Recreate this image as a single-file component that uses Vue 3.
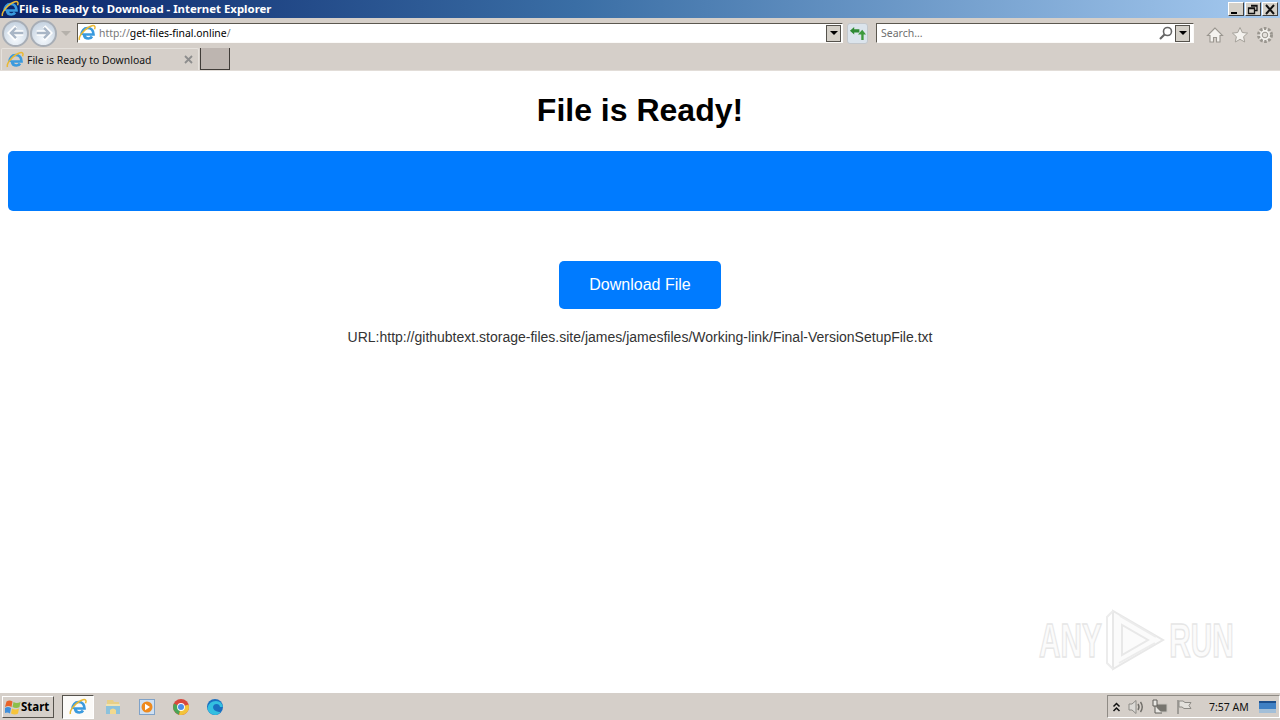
<script setup>
const taskApps = ['ie', 'folder', 'media', 'chrome', 'edge']
</script>

<template>
  <div class="screen">
    <header class="titlebar">
      <svg class="ie-small" viewBox="0 0 18 18"><use href="#ie-logo" /></svg>
      <span class="title-text">File is Ready to Download - Internet Explorer</span>
      <div class="win-buttons">
        <button class="win-btn"><span class="min-glyph"></span></button>
        <button class="win-btn">
          <svg viewBox="0 0 12 11" width="12" height="11"><path d="M4 1.500h6v5H8M1.500 4h6v5.500h-6zM1.500 4.500h6M4 2h6" fill="none" stroke="#111" stroke-width="1.300" /></svg>
        </button>
        <button class="win-btn">
          <svg viewBox="0 0 12 11" width="12" height="11"><path d="M2 1l8 9M10 1l-8 9" stroke="#111" stroke-width="2" /></svg>
        </button>
      </div>
    </header>

    <div class="toolbar">
      <div class="nav-group">
        <span class="nav-btn">
          <svg viewBox="0 0 24 24" width="22" height="22"><path d="M20 12H7" stroke="#fff" stroke-width="6" /><path d="M12 5l-7 7 7 7" fill="none" stroke="#fff" stroke-width="4" /><path d="M20 12H7M12 6.500L6.500 12l5.500 5.500" fill="none" stroke="#a9b6c6" stroke-width="2.600" /></svg>
        </span>
        <span class="nav-btn">
          <svg viewBox="0 0 24 24" width="22" height="22"><path d="M4 12h13" stroke="#fff" stroke-width="6" /><path d="M12 5l7 7-7 7" fill="none" stroke="#fff" stroke-width="4" /><path d="M4 12h13M12 6.500l5.500 5.500-5.500 5.500" fill="none" stroke="#a9b6c6" stroke-width="2.600" /></svg>
        </span>
        <span class="nav-caret"></span>
      </div>
      <div class="address">
        <svg class="ie-addr" viewBox="0 0 18 18"><use href="#ie-logo" /></svg>
        <span class="url"><span class="url-dim">http://</span>get-files-final.online<span class="url-dim">/</span></span>
        <span class="drop"><i></i></span>
      </div>
      <span class="refresh">
        <svg viewBox="0 0 18 18" width="18" height="18">
          <path d="M1 6l4.500-4v2.500H11v3.500H5.500V10z" fill="#2f8a34" />
          <path d="M13 16V10H9.500L14 5l4 5h-2.500v6z" fill="#3d9a3c" />
        </svg>
      </span>
      <div class="search">
        <span class="search-hint">Search...</span>
        <svg class="lens" viewBox="0 0 14 14" width="14" height="14"><circle cx="8.500" cy="5.500" r="4" fill="none" stroke="#666" stroke-width="1.600" /><path d="M5.500 8.500L1 13" stroke="#666" stroke-width="2.200" /></svg>
        <span class="drop"><i></i></span>
      </div>
      <div class="tools">
        <svg viewBox="0 0 18 18" width="18" height="18"><path d="M9 2L1.500 9.500H4V16h3.500v-4.500h3V16H14V9.500h2.500z" fill="#f4f2ee" stroke="#9a968f" stroke-width="1.100" /></svg>
        <svg viewBox="0 0 18 18" width="18" height="18"><path d="M9 1.500l2.300 5 5.300.6-4 3.600 1.100 5.300L9 13.300l-4.700 2.700 1.100-5.300-4-3.600 5.300-.6z" fill="#f4f2ee" stroke="#a5a19a" stroke-width="1" /></svg>
        <svg viewBox="0 0 18 18" width="18" height="18"><circle cx="9" cy="9" r="6.500" fill="#f4f2ee" stroke="#9a968f" stroke-width="3" stroke-dasharray="2.600 1.500" /><circle cx="9" cy="9" r="2.800" fill="#e4e1dc" stroke="#9a968f" /></svg>
      </div>
    </div>

    <div class="tabbar">
      <div class="tab">
        <svg class="ie-addr" viewBox="0 0 18 18"><use href="#ie-logo" /></svg>
        <span class="tab-text">File is Ready to Download</span>
        <svg class="tab-close" viewBox="0 0 9 9" width="9" height="9"><path d="M1 1l7 7M8 1L1 8" stroke="#8d8d8d" stroke-width="1.800" /></svg>
      </div>
      <div class="new-tab"></div>
    </div>

    <main class="page">
      <h1 class="heading">File is Ready!</h1>
      <div class="banner"></div>
      <button class="download">Download File</button>
      <p class="link-line">URL:http://githubtext.storage-files.site/james/jamesfiles/Working-link/Final-VersionSetupFile.txt</p>
      <div class="watermark">
        <span class="wm-text">ANY</span>
        <svg viewBox="0 0 60 64" width="60" height="64" class="wm-logo">
          <path d="M7 3v58L57 32zM16 17v30l26-15z" fill="#fbfbfb" stroke="#e8e8e8" stroke-width="2" />
          <path d="M7 3L1 9v46l6 6M14 8l36 21M13 55l36-20" fill="none" stroke="#ececec" stroke-width="2" />
        </svg>
        <span class="wm-text">RUN</span>
      </div>
    </main>

    <footer class="taskbar">
      <button class="start">
        <svg viewBox="0 0 16 16" width="16" height="16">
          <path d="M1.500 2.500q3-2 6 0l-1 5.500q-3-2-6.500 0z" fill="#e8642a" />
          <path d="M8.500 3q3 2 7 0l-1 5q-3 2-7 0z" fill="#8cbf4a" />
          <path d="M0 9q3-2 6 0l-1 5.500q-3-2-6 0z" fill="#3f8fdc" />
          <path d="M7 9.500q3 2 7 0l-1 5q-3 2-7 0z" fill="#f6c43a" />
        </svg>
        <span>Start</span>
      </button>
      <div class="apps">
        <span v-for="app in taskApps" :key="app" class="app" :class="{ active: app === 'ie' }">
          <svg v-if="app === 'ie'" viewBox="0 0 18 18" width="18" height="18"><use href="#ie-logo" /></svg>
          <svg v-else-if="app === 'folder'" viewBox="0 0 18 18" width="18" height="18">
            <path d="M3 2h6l1 2h5v5H3z" fill="#e7cf86" />
            <path d="M2 6h14v10H2z" fill="#8cc2dc" />
            <path d="M2 6h14v2H2z" fill="#f0e3b0" />
            <path d="M6 16v-4q3-3 6 0v4z" fill="#f2d98e" />
          </svg>
          <svg v-else-if="app === 'media'" viewBox="0 0 18 18" width="18" height="18">
            <rect x="1.500" y="1.500" width="15" height="15" fill="#cfe0f2" stroke="#7fa2c8" />
            <circle cx="9" cy="9" r="5.500" fill="#ee8a1e" />
            <path d="M7 5.800L12 9l-5 3.200z" fill="#fff" />
          </svg>
          <svg v-else-if="app === 'chrome'" viewBox="0 0 18 18" width="18" height="18">
            <circle cx="9" cy="9" r="8" fill="#d9473c" />
            <path d="M9 9L2 5.500A8 8 0 0 0 7 16.800z" fill="#4aa556" />
            <path d="M9 9l-2 7.800A8 8 0 0 0 16.500 6.500z" fill="#f3c43a" />
            <circle cx="9" cy="9" r="3.900" fill="#fff" />
            <circle cx="9" cy="9" r="3" fill="#4d8de8" />
          </svg>
          <svg v-else viewBox="0 0 18 18" width="18" height="18">
            <circle cx="9" cy="9" r="8" fill="#1a6fc0" />
            <path d="M1.500 10Q3 3 10 3q6 0 6.800 6H7q0 4 6 5 1 .2 2-.5Q12 17.500 8 16.800 1.500 15 1.500 10z" fill="#33bfe0" />
            <path d="M7 9q.5-3 3.500-3 3 0 3.500 3z" fill="#1a6fc0" />
          </svg>
        </span>
      </div>
      <div class="tray">
        <svg viewBox="0 0 9 10" width="9" height="10"><path d="M1.500 4.500L4.500 1.500l3 3M1.500 9l3-3 3 3" fill="none" stroke="#111" stroke-width="1.500" /></svg>
        <svg viewBox="0 0 18 16" width="18" height="16"><path d="M2 5h3l4-3.500v13L5 11H2z" fill="#dcdad6" stroke="#8d8b86" /><path d="M11 5q2 3 0 6M13.500 3q3.500 5 0 10" fill="none" stroke="#6f6d68" stroke-width="1.400" /></svg>
        <svg viewBox="0 0 18 16" width="18" height="16"><rect x="5" y="5" width="11" height="8" fill="#77756f" stroke="#c9c6c0" /><path d="M2 1h4v6H2zM4 7v7h7" fill="#e9e7e3" stroke="#5f5d58" /></svg>
        <svg viewBox="0 0 18 16" width="18" height="16"><path d="M3 1v14" stroke="#8d8b86" stroke-width="1.500" /><path d="M4 2h4l2 1.500h6l-2 3 2 3H9L7 8H4z" fill="#e3e1dc" stroke="#8d8b86" /></svg>
        <span class="clock">7:57 AM</span>
        <svg class="desk" viewBox="0 0 17 12" width="17" height="12"><rect width="17" height="12" fill="#3f80c4" /><rect y="8" width="17" height="4" fill="#a3bfd8" /><path d="M0 0h17v2H0z" fill="#1d4f8c" /></svg>
      </div>
    </footer>

    <svg class="defs" width="0" height="0">
      <defs>
        <g id="ie-logo">
          <path d="M3.500 11C3.500 7 6 4 9.500 4 13.500 4 15.500 7 15.500 10.500H6C6.300 13 8 14.500 10.500 14.500c1.500 0 2.800-.7 3.500-2" fill="none" stroke="#3a9ade" stroke-width="2.700" />
          <path d="M1.500 16C0 13 7 4 14 1.800c2.500-.7 3.800.5 2.500 3.500" fill="none" stroke="#eab934" stroke-width="1.500" />
        </g>
      </defs>
    </svg>
  </div>
</template>

<style>
html, body { margin: 0; padding: 0; background: #fff; }
</style>

<style scoped>
.screen {
  width: 1280px;
  height: 720px;
  display: flex;
  flex-direction: column;
  overflow: hidden;
  font-family: "Liberation Sans", Arial, sans-serif;
  background: #fff;
}
.defs { position: absolute; }
.titlebar {
  height: 18px;
  flex: none;
  display: flex;
  align-items: center;
  padding-left: 1px;
  background: linear-gradient(90deg, #0a246a 0%, #3a6ea5 45%, #a6caf0 100%);
  color: #fff;
}
.ie-small { width: 18px; height: 18px; flex: none; }
.title-text {
  font: bold 11.400px/16px "Noto Sans", sans-serif;
  margin-top: -1px;
  white-space: nowrap;
}
.win-buttons { margin-left: auto; display: flex; gap: 1px; margin-right: 2px; }
.win-btn {
  width: 16px;
  height: 14px;
  padding: 0;
  border: 1px solid;
  border-color: #fff #404040 #404040 #fff;
  background: #d4d0c8;
  display: flex;
  align-items: center;
  justify-content: center;
}
.min-glyph { width: 6px; height: 2px; background: #000; margin: 7px 5px 0 0; }
.toolbar {
  height: 29px;
  flex: none;
  display: flex;
  align-items: center;
  background: #d5cfc9;
  padding: 1px 0 0 2px;
  box-sizing: border-box;
}
.nav-group { display: flex; align-items: center; width: 75px; flex: none; }
.nav-btn {
  width: 27px;
  height: 27px;
  border-radius: 50%;
  border: 2px solid #a8aeb6;
  box-sizing: border-box;
  background: radial-gradient(circle at 50% 75%, #f5f9fd, #bccbdb);
  display: flex;
  align-items: center;
  justify-content: center;
  margin-right: 1px;
}
.nav-caret {
  width: 0;
  height: 0;
  margin-left: 3px;
  border-left: 5px solid transparent;
  border-right: 5px solid transparent;
  border-top: 5px solid #b5b1ab;
}
.address, .search {
  height: 20px;
  box-sizing: border-box;
  display: flex;
  align-items: center;
  background: #fff;
  border: 1px solid;
  border-color: #5b574f #fbfaf8 #fbfaf8 #5b574f;
  flex: none;
}
.address { width: 766px; }
.ie-addr { width: 18px; height: 18px; flex: none; }
.url {
  font: 10.400px "Noto Sans", sans-serif;
  color: #000;
  margin-left: 3px;
  white-space: nowrap;
}
.url-dim { color: #777; }
.drop {
  margin-left: auto;
  margin-right: 1px;
  width: 15px;
  height: 17px;
  flex: none;
  background: #d4d0c8;
  border: 1px solid #55524c;
  box-sizing: border-box;
  display: flex;
  align-items: center;
  justify-content: center;
}
.drop i {
  width: 0;
  height: 0;
  border-left: 4px solid transparent;
  border-right: 4px solid transparent;
  border-top: 4px solid #000;
}
.refresh {
  width: 21px;
  height: 21px;
  margin-left: 4px;
  flex: none;
  background: #dbe4ec;
  border: 1px solid #c3c7cb;
  border-radius: 3px;
  box-sizing: border-box;
  display: flex;
  align-items: center;
  justify-content: center;
}
.refresh svg { width: 17px; height: 17px; }
.search { width: 318px; margin-left: 8px; padding-left: 4px; }
.search-hint {
  font: 10.500px "Noto Sans", sans-serif;
  color: #6f6f6f;
}
.lens { margin-left: auto; }
.search .drop { margin-left: 2px; margin-right: 3px; }
.tools {
  display: flex;
  gap: 7px;
  margin-left: 12px;
  margin-top: 4px;
}
.tabbar {
  height: 24px;
  flex: none;
  display: flex;
  align-items: flex-end;
  background: #d5cfc9;
  box-sizing: border-box;
  border-bottom: 1px solid #e2ddd8;
  padding-left: 1px;
}
.tab {
  width: 198px;
  height: 22px;
  flex: none;
  display: flex;
  align-items: center;
  box-sizing: border-box;
  padding-left: 4px;
  border: 1px solid #e6e2dd;
  border-bottom: 0;
  border-radius: 2px 2px 0 0;
}
.tab-text {
  font: 10.400px "Noto Sans", sans-serif;
  color: #111;
  margin-left: 3px;
  white-space: nowrap;
}
.tab-close { margin-left: auto; margin-right: 5px; }
.new-tab {
  width: 30px;
  height: 22px;
  box-sizing: border-box;
  flex: none;
  margin-left: 1px;
  background: #bdb5b0;
  border: 1px solid #403c38;
  border-top: 0;
}
.page {
  flex: 1;
  min-height: 0;
  position: relative;
  display: flex;
  flex-direction: column;
  align-items: center;
  padding: 0 8px;
}
.heading {
  margin: 21px 0 0;
  font-size: 32px;
  line-height: 37px;
  font-weight: bold;
  color: #000;
}
.banner {
  width: 100%;
  height: 60px;
  margin-top: 22px;
  background: #007bff;
  border-radius: 5px;
}
.download {
  width: 162px;
  height: 48px;
  margin-top: 50px;
  border: 0;
  border-radius: 5px;
  background: #007bff;
  color: #fff;
  font: 16px "Liberation Sans", Arial, sans-serif;
  padding: 0;
}
.link-line {
  margin: 20px 0 0;
  font-size: 14px;
  line-height: 16px;
  color: #333;
}
.watermark {
  position: absolute;
  right: 46px;
  bottom: 20px;
  display: flex;
  align-items: center;
  gap: 3px;
  pointer-events: none;
}
.wm-text {
  display: flex;
  justify-content: center;
  width: 65px;
  font: bold 48px "Liberation Sans", Arial, sans-serif;
  color: #fbfbfb;
  -webkit-text-stroke: 1.500px #e6e6e6;
  transform: scaleX(0.62);
}
.taskbar {
  height: 28px;
  flex: none;
  display: flex;
  align-items: center;
  background: #d5cfc9;
  border-top: 1px solid #fff;
  box-sizing: border-box;
  padding-left: 2px;
}
.start {
  width: 52px;
  height: 22px;
  padding: 0 0 0 2px;
  display: flex;
  align-items: center;
  gap: 0;
  box-sizing: border-box;
  border: 1px solid;
  border-color: #fff #55524c #55524c #fff;
  background: #d5cfc9;
  font: bold 11.500px "Noto Sans", sans-serif;
  color: #000;
}
.apps { display: flex; margin-left: 8px; }
.app {
  width: 34px;
  height: 24px;
  display: flex;
  align-items: center;
  justify-content: center;
  box-sizing: border-box;
}
.app.active {
  width: 32px;
  margin-right: 2px;
  background: #fbfaf8;
  border: 1px solid;
  border-color: #55524c #fff #fff #55524c;
}
.tray {
  margin-left: auto;
  width: 173px;
  height: 23px;
  display: flex;
  align-items: center;
  box-sizing: border-box;
  border: 1px solid;
  border-color: #8f8b85 #fff #fff #8f8b85;
  padding-left: 4px;
  gap: 6px;
}
.clock {
  font: 10.500px "Noto Sans", sans-serif;
  color: #111;
  margin-left: 10px;
  white-space: nowrap;
}
.desk { margin-left: auto; margin-right: 3px; }
</style>
